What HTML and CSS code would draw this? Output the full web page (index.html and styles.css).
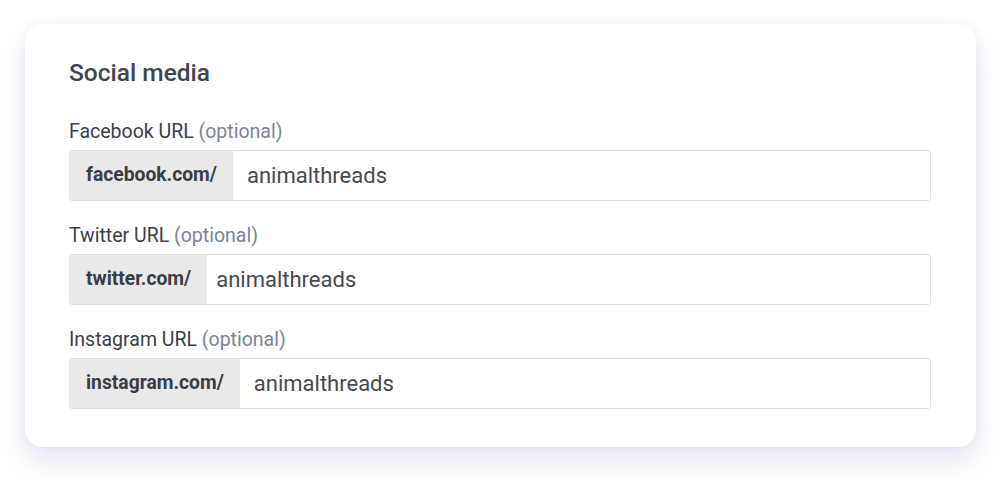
FILE: index.html
```html
<!DOCTYPE html>
<html lang="en">
<head>
<meta charset="utf-8">
<title>Social media</title>
<link rel="stylesheet" href="styles.css">
</head>
<body>
<div class="card">
  <h2 class="title">Social media</h2>
  <div class="field">
    <label class="label">Facebook URL <span class="opt">(optional)</span></label>
    <div class="group">
      <span class="prefix">facebook.com/</span>
      <span class="value">animalthreads</span>
    </div>
  </div>
  <div class="field">
    <label class="label">Twitter URL <span class="opt">(optional)</span></label>
    <div class="group">
      <span class="prefix">twitter.com/</span>
      <span class="value value-tight">animalthreads</span>
    </div>
  </div>
  <div class="field">
    <label class="label">Instagram URL <span class="opt">(optional)</span></label>
    <div class="group">
      <span class="prefix">instagram.com/</span>
      <span class="value">animalthreads</span>
    </div>
  </div>
</div>
</body>
</html>
```
FILE: styles.css
```css
html, body {
  margin: 0;
  background: #ffffff;
}
body {
  min-height: 480px;
  box-sizing: border-box;
  padding: 24px 0 33px 25px;
  font-family: Roboto, "Liberation Sans", sans-serif;
}
.card {
  box-sizing: border-box;
  width: 951px;
  height: 423px;
  background: #ffffff;
  border-radius: 18px;
  padding: 34px 45px 0 44px;
  display: flex;
  flex-direction: column;
  box-shadow: 0 14px 28px rgba(65, 80, 165, 0.14), 0 0 12px rgba(65, 80, 165, 0.05);
}
.title {
  margin: 0 0 32px 0;
  font-size: 24.5px;
  line-height: 30px;
  font-weight: 500;
  color: #40454e;
}
.field {
  display: flex;
  flex-direction: column;
  gap: 7px;
  margin-bottom: 23px;
}
.label {
  font-size: 19.5px;
  line-height: 23px;
  color: #3b4049;
}
.opt {
  color: #7a8593;
}
.group {
  display: flex;
  height: 51px;
  box-sizing: border-box;
  border: 1px solid #e1e1e1;
  border-radius: 3px;
  overflow: hidden;
}
.prefix {
  display: flex;
  align-items: center;
  padding: 0 16px 2px 16px;
  background: #e9e9e9;
  font-size: 19.3px;
  font-weight: 700;
  color: #3a3d43;
}
.value {
  display: flex;
  align-items: center;
  padding: 0 14px;
  font-size: 22px;
  color: #47494e;
}
.value-tight {
  padding-left: 9px;
}
```
